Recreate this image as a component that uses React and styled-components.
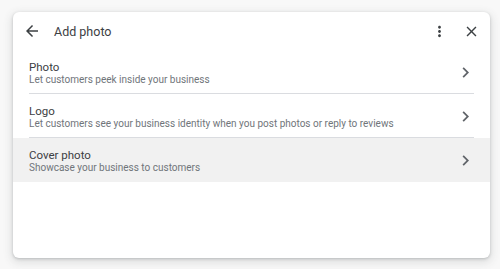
import React from "react";
import styled, { createGlobalStyle } from "styled-components";

const GlobalStyle = createGlobalStyle`
  html, body {
    margin: 0;
    padding: 0;
    background: #f8f8f8;
    font-family: Roboto, "Liberation Sans", Arial, sans-serif;
  }
`;

const Page = styled.div`
  width: 500px;
  height: 269px;
  box-sizing: border-box;
  padding: 12px 10px 11px 13px;
  display: flex;
`;

const Dialog = styled.div`
  flex: 1;
  background: #fff;
  border-radius: 6px;
  box-shadow: 0 1px 3px rgba(60, 64, 67, 0.25), 0 3px 8px 2px rgba(60, 64, 67, 0.12);
  display: flex;
  flex-direction: column;
  overflow: hidden;
`;

const Header = styled.div`
  height: 38px;
  display: flex;
  align-items: center;
  padding: 0 10px 0 10px;
`;

const Title = styled.div`
  flex: 1;
  margin-left: 13px;
  font-size: 12.5px;
  color: #3c4043;
`;

const IconButton = styled.span`
  display: flex;
  align-items: center;
  justify-content: center;
  width: ${p => p.size}px;
  height: ${p => p.size}px;
  margin-left: ${p => p.gap || 0}px;
  color: ${p => p.color || "#3c4043"};
`;

const List = styled.div`
  display: flex;
  flex-direction: column;
`;

const Row = styled.div`
  height: 44px;
  display: flex;
  align-items: center;
  padding: 1px 14px 0 16px;
  background: ${p => (p.active ? "#f1f1f1" : "transparent")};
  position: relative;
  box-sizing: border-box;
  &:after {
    content: "";
    display: ${p => (p.divider ? "block" : "none")};
    position: absolute;
    left: 16px;
    right: 16px;
    bottom: 0;
    height: 1px;
    background: #dadce0;
  }
`;

const RowText = styled.div`
  flex: 1;
  display: flex;
  flex-direction: column;
`;

const RowTitle = styled.div`
  font-size: 11.5px;
  line-height: 14px;
  color: #3c4043;
`;

const RowSub = styled.div`
  font-size: 10px;
  line-height: 12px;
  color: #70757a;
`;

const Icon = ({ d, size }) => (
  <svg width={size} height={size} viewBox="0 0 24 24" fill="currentColor">
    <path d={d} />
  </svg>
);

const ARROW = "M20 11H7.83l5.59-5.59L12 4l-8 8 8 8 1.41-1.41L7.83 13H20v-2z";
const DOTS =
  "M12 8c1.1 0 2-.9 2-2s-.9-2-2-2-2 .9-2 2 .9 2 2 2zm0 2c-1.1 0-2 .9-2 2s.9 2 2 2 2-.9 2-2-.9-2-2-2zm0 6c-1.1 0-2 .9-2 2s.9 2 2 2 2-.9 2-2-.9-2-2-2z";
const CLOSE =
  "M19 6.41L17.59 5 12 10.59 6.41 5 5 6.41 10.59 12 5 17.59 6.41 19 12 13.41 17.59 19 19 17.59 13.41 12z";
const CHEVRON = "M10 6L8.59 7.41 13.17 12l-4.58 4.59L10 18l6-6z";

const items = [
  { title: "Photo", sub: "Let customers peek inside your business", divider: true },
  {
    title: "Logo",
    sub: "Let customers see your business identity when you post photos or reply to reviews",
    divider: true,
  },
  { title: "Cover photo", sub: "Showcase your business to customers", active: true },
];

export default function App() {
  return (
    <>
      <GlobalStyle />
      <Page>
        <Dialog>
          <Header>
            <IconButton size={18}>
              <Icon d={ARROW} size={18} />
            </IconButton>
            <Title>Add photo</Title>
            <IconButton size={17}>
              <Icon d={DOTS} size={17} />
            </IconButton>
            <IconButton size={17} gap={15}>
              <Icon d={CLOSE} size={17} />
            </IconButton>
          </Header>
          <List>
            {items.map(it => (
              <Row key={it.title} divider={it.divider} active={it.active}>
                <RowText>
                  <RowTitle>{it.title}</RowTitle>
                  <RowSub>{it.sub}</RowSub>
                </RowText>
                <IconButton size={21} color="#5f6368">
                  <Icon d={CHEVRON} size={21} />
                </IconButton>
              </Row>
            ))}
          </List>
        </Dialog>
      </Page>
    </>
  );
}
